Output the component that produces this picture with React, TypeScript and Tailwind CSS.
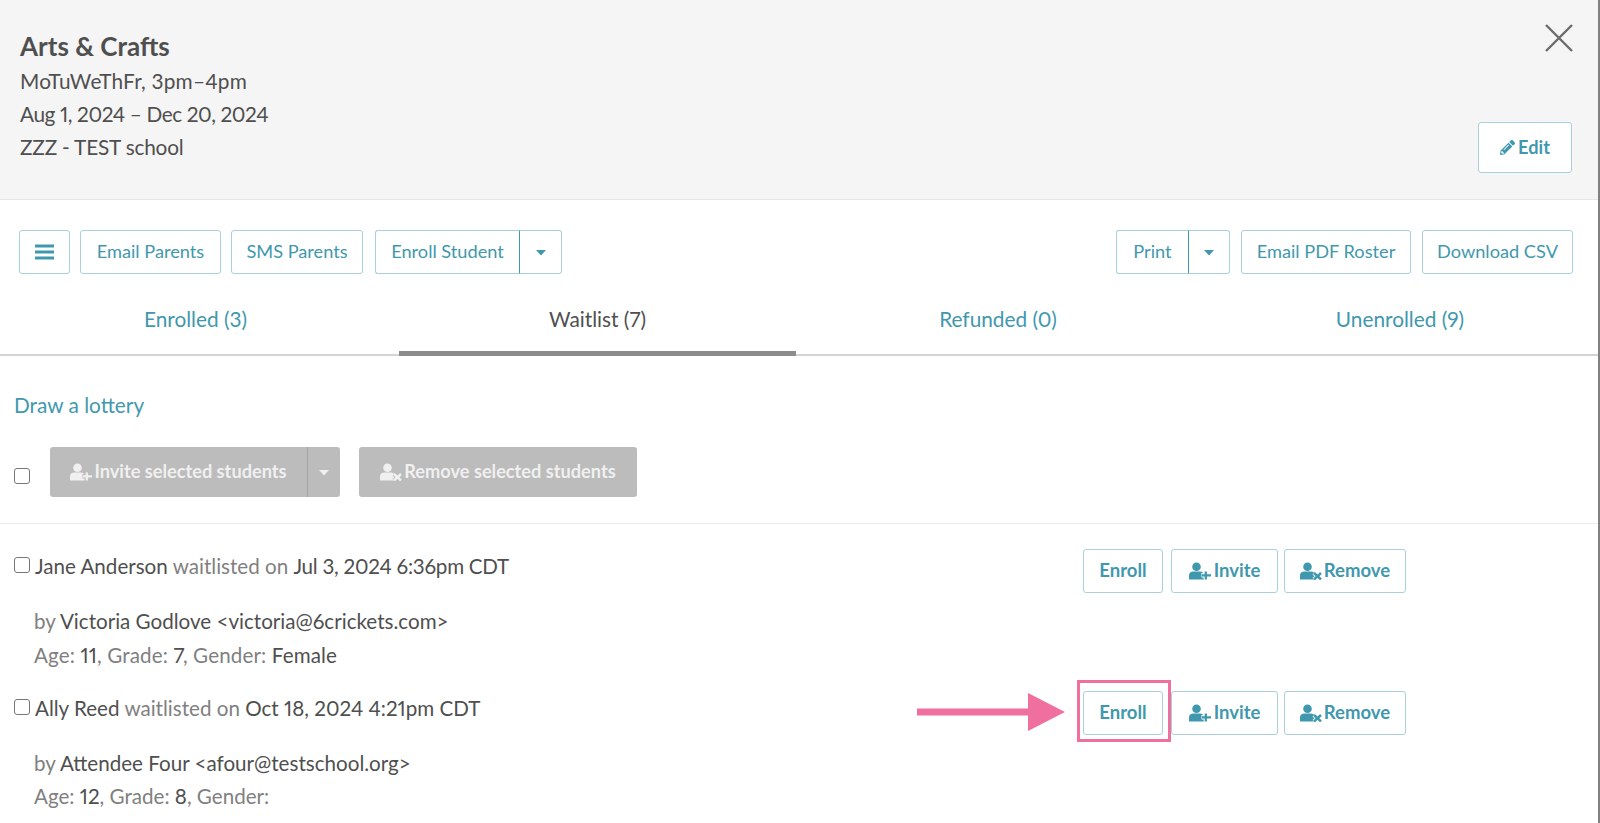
import { FaPencilAlt } from "react-icons/fa";

const teal = "text-[#3f98ad]";

function Btn({ className = "", children }: { className?: string; children: React.ReactNode }) {
  return (
    <button className={`flex items-center justify-center rounded-[3px] border border-[#a9d0db] bg-white text-[18.2px] text-[#3f98ad] ${className}`}>
      {children}
    </button>
  );
}

function Caret({ color = "#3f98ad" }: { color?: string }) {
  return (
    <svg width="10" height="6" viewBox="0 0 10 6" className="mt-[2px]">
      <path d="M0 0h10L5 5.5z" fill={color} />
    </svg>
  );
}

function UserIcon({ kind, color = "#3f98ad", bg = "#ffffff" }: { kind: "plus" | "x"; color?: string; bg?: string }) {
  return (
    <svg width="22" height="18" viewBox="0 0 22 18" className="shrink-0">
      <circle cx="7.5" cy="4.8" r="4.3" fill={color} />
      <path d="M0 17.5v-4C0 11 1.8 9.6 4.2 9.6h6.6c2.4 0 4.2 1.4 4.2 3.9v4z" fill={color} />
      {kind === "plus" ? (
        <>
          <path d="M16.8 9v8.6M12.5 13.3h9.5" stroke={bg} strokeWidth="4.4" fill="none" />
          <path d="M16.8 9.4v8M13 13.3h9" stroke={color} strokeWidth="2.3" fill="none" />
        </>
      ) : (
        <>
          <path d="M14 11l7 6.5M21 11l-7 6.5" stroke={bg} strokeWidth="4.4" fill="none" />
          <path d="M14 11l7 6.5M21 11l-7 6.5" stroke={color} strokeWidth="2.4" fill="none" />
        </>
      )}
    </svg>
  );
}

function Check({ className = "" }: { className?: string }) {
  return <span className={`block h-[16px] w-[16px] shrink-0 rounded-[3px] border border-[#767676] bg-white ${className}`} />;
}

function RowButtons() {
  return (
    <div className="flex gap-2">
      <Btn className="h-[44px] w-[80px] text-[18.5px] font-bold">Enroll</Btn>
      <Btn className="h-[44px] w-[107px] gap-[3px] text-[18.5px] font-bold"><UserIcon kind="plus" />Invite</Btn>
      <Btn className="ml-[-2px] h-[44px] w-[122px] gap-[2px] text-[18.5px] font-bold"><UserIcon kind="x" />Remove</Btn>
    </div>
  );
}

function Student({ name, date, by, email, age, grade, gender, highlight, className = "", dateClass = "", ageClass = "" }: {
  name: string; date: string; by: string; email: string; age: string; grade: string; gender?: string; highlight?: boolean; className?: string; dateClass?: string; ageClass?: string;
}) {
  return (
    <div className={`relative ${className}`}>
      <div className="flex items-start justify-between pr-[194px]">
        <div className="flex items-center gap-[5px] pl-[14px] pt-[2px]">
          <Check className="mt-[-3px]" />
          <span><span className="text-[#4f4f4f]">{name}</span> <span className="text-[#808080]">waitlisted on</span> <span className={`text-[#4f4f4f] ${dateClass}`}>{date}</span></span>
        </div>
        <RowButtons />
      </div>
      <div className="mt-[12px] pl-[34px] leading-[33px]">
        <div><span className="text-[#808080]">by</span> <span className="text-[#4f4f4f]">{by} &lt;{email}&gt;</span></div>
        <div className={`text-[#808080] ${ageClass}`}>Age: <span className="text-[#4f4f4f]">{age}</span>, Grade: <span className="text-[#4f4f4f]">{grade}</span>, Gender: {gender && <span className="text-[#4f4f4f]">{gender}</span>}</div>
      </div>
      {highlight && (
        <>
          <div className="absolute left-[1077px] top-[-11px] h-[62px] w-[94px] border-[3px] border-[#ef6f9e]" />
          <svg width="150" height="38" viewBox="0 0 150 38" className="absolute left-[917px] top-[2px]">
            <path d="M0 15.5h111V0l37 19-37 19V22.5H0z" fill="#ef6f9e" />
          </svg>
        </>
      )}
    </div>
  );
}

export default function App() {
  return (
    <div className="relative h-[823px] w-[1600px] overflow-hidden bg-white font-['Lato',sans-serif] text-[20.6px] text-[#4f4f4f] [font-variant-numeric:proportional-nums]">
      <div className="absolute right-0 top-0 h-full w-[2px] bg-[#808080]" />
      <header className="flex h-[200px] justify-between border-b border-[#e6e6e6] bg-[#f5f5f5] pl-[20px] pr-[28px]">
        <div className="pt-[29px]">
          <div className="text-[26px] font-bold leading-[34px]">Arts &amp; Crafts</div>
          <div className="mt-[1px] text-[20.8px] leading-[33px] tracking-[0.2px]">MoTuWeThFr, 3pm–4pm</div>
          <div className="text-[20.8px] leading-[33px] tracking-[-0.4px]">Aug 1, 2024 – Dec 20, 2024</div>
          <div className="text-[20.8px] leading-[33px] tracking-[-0.2px]">ZZZ - TEST school</div>
        </div>
        <div className="flex flex-col items-end justify-between pb-[26px] pt-[24px]">
          <svg width="28" height="28" viewBox="0 0 28 28" className="mr-[-1px]"><path d="M1 1l26 26M27 1L1 27" stroke="#6b6b6b" strokeWidth="2.4" /></svg>
          <Btn className="h-[51px] w-[94px] gap-[3px] bg-transparent font-bold">
            <FaPencilAlt size={15} />Edit
          </Btn>
        </div>
      </header>

      <div className="flex justify-between pl-[19px] pr-[27px] pt-[30px]">
        <div className="flex gap-[10px]">
          <Btn className="h-[44px] w-[51px]">
            <svg width="19" height="16" viewBox="0 0 19 16"><path d="M0 2h19M0 8h19M0 14h19" stroke="#3f98ad" strokeWidth="3" /></svg>
          </Btn>
          <Btn className="h-[44px] w-[141px]">Email Parents</Btn>
          <Btn className="h-[44px] w-[132px]">SMS Parents</Btn>
          <div className="ml-[2px] flex">
            <Btn className="h-[44px] w-[145px] rounded-r-none border-r-[#3f98ad]">Enroll Student</Btn>
            <Btn className="h-[44px] w-[42px] rounded-l-none border-l-0"><Caret /></Btn>
          </div>
        </div>
        <div className="flex gap-[11px]">
          <div className="flex">
            <Btn className="h-[44px] w-[73px] rounded-r-none border-r-[#3f98ad]">Print</Btn>
            <Btn className="h-[44px] w-[41px] rounded-l-none border-l-0"><Caret /></Btn>
          </div>
          <Btn className="h-[44px] w-[170px]">Email PDF Roster</Btn>
          <Btn className="h-[44px] w-[151px]">Download CSV</Btn>
        </div>
      </div>

      <nav className="mt-[24px] grid h-[58px] grid-cols-[399px_397px_404px_1fr] border-b-2 border-[#d4d4d4] text-[20.8px]">
        <div className={`flex items-center justify-center pb-[14px] pr-[8px] ${teal}`}>Enrolled (3)</div>
        <div className="relative mb-[-2px] flex items-center justify-center border-b-[5px] border-[#8c8c8c] pb-[11px]">Waitlist (7)</div>
        <div className={`flex items-center justify-center pb-[14px] ${teal}`}>Refunded (0)</div>
        <div className={`flex items-center justify-center pb-[14px] ${teal}`}>Unenrolled (9)</div>
      </nav>

      <div className={`mt-[35px] pl-[14px] text-[20.8px] leading-[28px] ${teal}`}>Draw a lottery</div>

      <div className="mt-[28px] flex items-center pl-[14px]">
        <Check className="mt-[7px]" />
        <div className="ml-[20px] flex h-[50px] text-[18.2px] font-bold text-[#f0f0f0]">
          <div className="flex w-[258px] items-center justify-center gap-[2px] rounded-l-[3px] border-r border-[#a3a3a3] bg-[#bcbcbc]"><UserIcon kind="plus" color="#f0f0f0" bg="#bcbcbc" />Invite selected students</div>
          <div className="flex w-[32px] items-center justify-center rounded-r-[3px] bg-[#bcbcbc]"><Caret color="#f0f0f0" /></div>
        </div>
        <div className="ml-[19px] flex h-[50px] w-[278px] items-center justify-center gap-[2px] rounded-[3px] bg-[#bcbcbc] text-[18.2px] font-bold text-[#f0f0f0]"><UserIcon kind="x" color="#f0f0f0" bg="#bcbcbc" />Remove selected students</div>
      </div>

      <div className="mt-[26px] border-t border-[#ececec]" />

      <Student className="mt-[25px]" name="Jane Anderson" date="Jul 3, 2024 6:36pm CDT" dateClass="tracking-[-0.25px]" ageClass="mt-[1px] tracking-[0.13px]" by="Victoria Godlove" email="victoria@6crickets.com" age="11" grade="7" gender="Female" />
      <Student className="mt-[19px]" name="Ally Reed" date="Oct 18, 2024 4:21pm CDT" by="Attendee Four" email="afour@testschool.org" age="12" grade="8" highlight />
    </div>
  );
}
